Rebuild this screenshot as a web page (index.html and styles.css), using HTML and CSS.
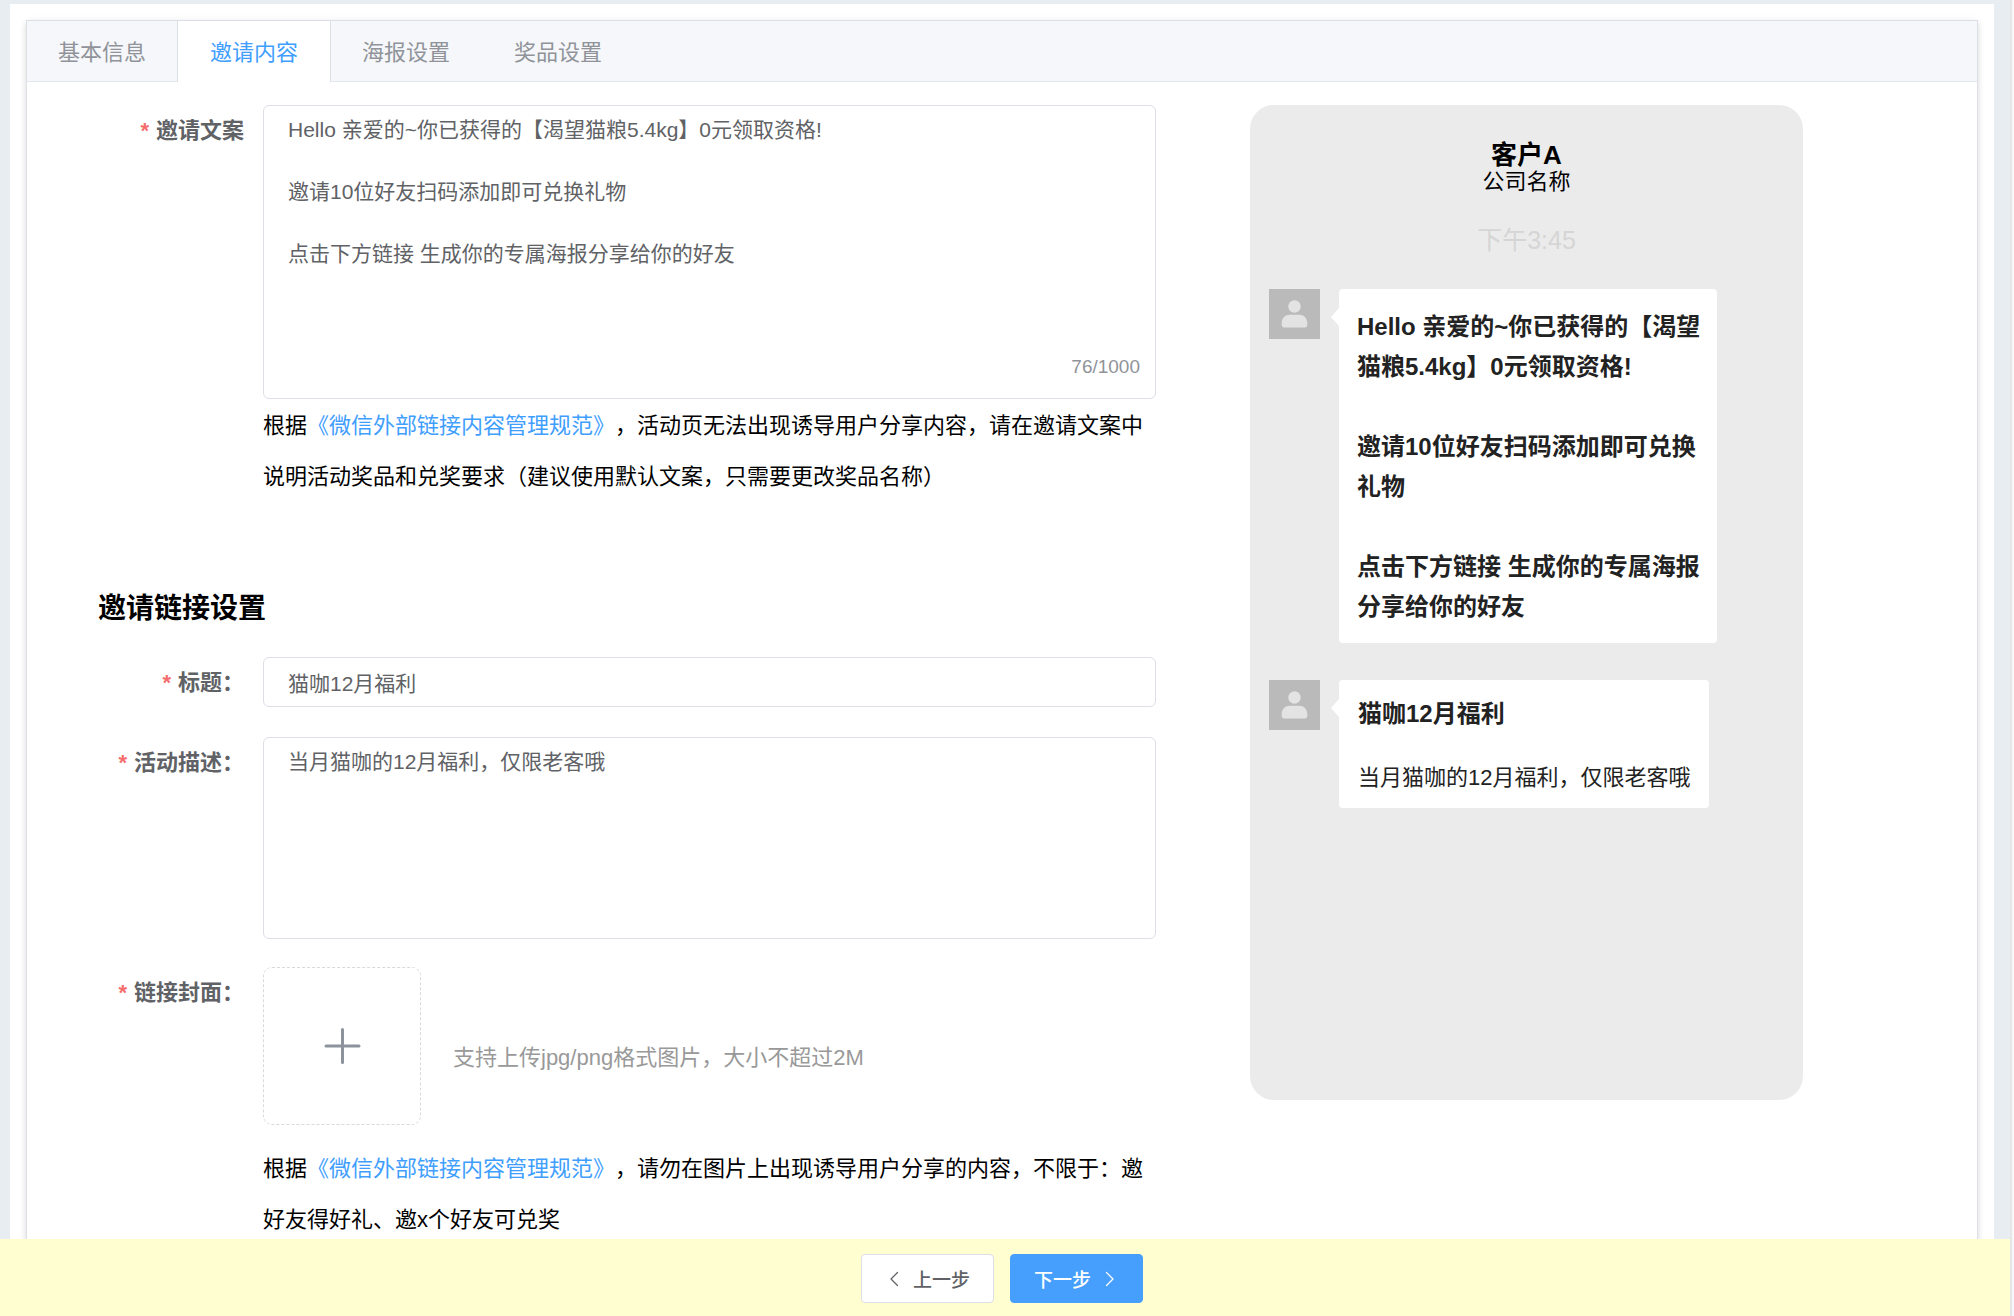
FILE: index.html
```html
<!DOCTYPE html>
<html lang="zh-CN">
<head>
<meta charset="utf-8">
<meta name="viewport" content="width=device-width, initial-scale=1">
<title>邀请内容</title>
<link rel="stylesheet" href="styles.css">
</head>
<body>
<div class="app">
  <main class="page">
    <div class="sheet">
      <section class="card">
        <nav class="tabs" role="tablist">
          <button class="tab" type="button" role="tab">基本信息</button>
          <button class="tab tab-active" type="button" role="tab" aria-selected="true">邀请内容</button>
          <button class="tab" type="button" role="tab">海报设置</button>
          <button class="tab" type="button" role="tab">奖品设置</button>
        </nav>
        <div class="content">
          <form class="form" id="invite-form">
            <div class="row">
              <label class="label" for="copy">邀请文案</label>
              <div class="field">
                <div class="counted">
                  <textarea class="control copy" id="copy">Hello 亲爱的~你已获得的【渴望猫粮5.4kg】0元领取资格!

邀请10位好友扫码添加即可兑换礼物

点击下方链接 生成你的专属海报分享给你的好友</textarea>
                  <span class="count">76/1000</span>
                </div>
                <p class="help">根据<a href="#rules">《微信外部链接内容管理规范》</a>，活动页无法出现诱导用户分享内容，请在邀请文案中说明活动奖品和兑奖要求（建议使用默认文案，只需要更改奖品名称）</p>
              </div>
            </div>
            <h2 class="section-title">邀请链接设置</h2>
            <div class="row">
              <label class="label" for="title">标题：</label>
              <div class="field"><input class="control" id="title" type="text" value="猫咖12月福利"></div>
            </div>
            <div class="row">
              <label class="label" for="desc">活动描述：</label>
              <div class="field"><textarea class="control desc" id="desc">当月猫咖的12月福利，仅限老客哦</textarea></div>
            </div>
            <div class="row">
              <label class="label" for="cover">链接封面：</label>
              <div class="field">
                <div class="upload-line">
                  <button class="upload" id="cover" type="button" aria-label="上传图片">
                    <svg width="38" height="38" viewBox="0 0 38 38" fill="none" stroke="#8c939d" stroke-width="3" stroke-linecap="round"><path d="M19.500 2.500v33M3 19h33"/></svg>
                  </button>
                  <span class="hint">支持上传jpg/png格式图片，大小不超过2M</span>
                </div>
                <p class="help help-cover">根据<a href="#rules">《微信外部链接内容管理规范》</a>，请勿在图片上出现诱导用户分享的内容，不限于：邀好友得好礼、邀x个好友可兑奖</p>
              </div>
            </div>
          </form>
          <aside class="phone">
            <header class="phone-head">
              <strong class="phone-name">客户A</strong>
              <span class="phone-company">公司名称</span>
              <time class="phone-time">下午3:45</time>
            </header>
            <div class="message">
              <svg class="avatar" viewBox="0 0 51 50"><path fill="#bababa" d="M0 0h51v50H0z"/><g fill="#e3e3e3"><circle cx="25.500" cy="17.500" r="6.200"/><path d="M12.700 36v-2c0-5 3.500-8.300 8.300-8.300h9c4.800 0 8.300 3.300 8.300 8.300v2c0 1.500-1 2.400-2.400 2.400H15.100c-1.400 0-2.400-.9-2.400-2.400z"/></g></svg>
              <div class="bubble bubble-copy">Hello 亲爱的~你已获得的【渴望猫粮5.4kg】0元领取资格!

邀请10位好友扫码添加即可兑换礼物

点击下方链接 生成你的专属海报分享给你的好友</div>
            </div>
            <div class="message">
              <svg class="avatar" viewBox="0 0 51 50"><path fill="#bababa" d="M0 0h51v50H0z"/><g fill="#e3e3e3"><circle cx="25.500" cy="17.500" r="6.200"/><path d="M12.700 36v-2c0-5 3.500-8.300 8.300-8.300h9c4.800 0 8.300 3.300 8.300 8.300v2c0 1.500-1 2.400-2.400 2.400H15.100c-1.400 0-2.400-.9-2.400-2.400z"/></g></svg>
              <div class="bubble bubble-link">
                <strong>猫咖12月福利</strong>
                <span>当月猫咖的12月福利，仅限老客哦</span>
              </div>
            </div>
          </aside>
        </div>
      </section>
    </div>
  </main>
  <footer class="footer">
    <button class="btn" type="button"><svg width="18" height="18" viewBox="0 0 18 18" fill="none" stroke="currentColor" stroke-width="1.300" stroke-linecap="round" stroke-linejoin="round"><path d="M12.500 2.500L6 9l6.500 6.500"/></svg>上一步</button>
    <button class="btn btn-primary" type="button">下一步<svg width="18" height="18" viewBox="0 0 18 18" fill="none" stroke="currentColor" stroke-width="1.300" stroke-linecap="round" stroke-linejoin="round"><path d="M5.500 2.500L12 9l-6.500 6.500"/></svg></button>
  </footer>
</div>
</body>
</html>
```
FILE: styles.css
```css
* {
  box-sizing: border-box;
}

body {
  margin: 0;
  background: #f8f8f8;
  color: #000;
  font-family: "Liberation Sans", "Noto Sans CJK SC", sans-serif;
  font-size: 22px;
  text-spacing-trim: space-all;
}

button,
input,
textarea {
  font: inherit;
}

a {
  color: #409eff;
  text-decoration: none;
}

.app {
  display: flex;
  flex-direction: column;
  height: 100vh;
  margin-right: 2px;
  border-right: 2px solid #e6e6e8;
}

.page {
  flex: 1;
  min-height: 0;
  padding: 4px 16px 0 10px;
  overflow-y: auto;
  scrollbar-width: none;
  background: #e8edf2;
}

.sheet {
  padding: 16px;
  background: #fff;
}

.card {
  border: 1px solid #dcdfe6;
  background: #fff;
  box-shadow: 0 3px 6px rgba(0, 0, 0, 0.12), 0 0 9px rgba(0, 0, 0, 0.04);
}

/* Tabs */
.tabs {
  display: flex;
  height: 61px;
  border-bottom: 1px solid #e4e7ed;
  background: #f5f7fa;
}

.tab {
  height: 61px;
  padding: 2px 31px 0;
  border: 1px solid transparent;
  border-width: 0 1px;
  background: none;
  color: #909399;
  line-height: 59px;
}

.tab:first-child {
  margin-left: -1px;
}

.tab-active {
  margin: 0 -1px;
  padding: 2px 32px 0;
  border-color: #dcdfe6;
  background: #fff;
  color: #409eff;
}

.content {
  display: flex;
  align-items: flex-start;
  gap: 94px;
  padding: 23px 174px 40px 71px;
}

/* Form */
.form {
  flex: 1;
  min-width: 0;
}

.row {
  display: flex;
  margin-bottom: 28px;
}

.label {
  flex: none;
  width: 165px;
  padding-right: 19px;
  color: #606266;
  font-weight: bold;
  line-height: 52px;
  text-align: right;
}

.label::before {
  content: "*";
  margin-right: 7px;
  color: #f56c6c;
}

.field {
  flex: 1;
  min-width: 0;
}

.control {
  display: block;
  width: 100%;
  height: 50px;
  padding: 8px 24px;
  border: 1px solid #dcdfe6;
  border-radius: 6px;
  outline: none;
  resize: none;
  background: #fff;
  color: #606266;
  font-size: 21px;
  line-height: 31px;
}

.copy {
  height: 294px;
}

.desc {
  height: 202px;
}

.counted {
  position: relative;
}

.count {
  position: absolute;
  right: 16px;
  bottom: 20px;
  color: #909399;
  font-size: 19px;
  line-height: 24px;
}

.help {
  margin: 0;
  padding-top: 1px;
  line-height: 51px;
}

.help-cover {
  margin-top: 17px;
}

.section-title {
  margin: 87px 0 28px;
  font-size: 28px;
  line-height: 40px;
}

.upload-line {
  display: flex;
  align-items: center;
  gap: 32px;
}

.upload {
  display: flex;
  align-items: center;
  justify-content: center;
  width: 158px;
  height: 158px;
  border: 1px dashed #d9d9d9;
  border-radius: 9px;
  background: #fff;
}

.hint {
  padding-top: 18px;
  color: #999;
}

/* Chat preview */
.phone {
  flex: none;
  width: 553px;
  min-height: 995px;
  padding: 36px 19px;
  border-radius: 24px;
  background: #ebebeb;
}

.phone-head {
  display: flex;
  flex-direction: column;
  align-items: center;
  margin-bottom: 31px;
}

.phone-name {
  font-size: 26px;
  line-height: 28px;
}

.phone-company {
  line-height: 26px;
}

.phone-time {
  margin-top: 27px;
  color: #d5d5d5;
  font-size: 25px;
  line-height: 36px;
}

.message {
  display: flex;
  align-items: flex-start;
  gap: 19px;
  margin-bottom: 37px;
}

.avatar {
  flex: none;
  width: 51px;
  height: 50px;
}

.bubble {
  position: relative;
  max-width: 378px;
  border-radius: 4px;
  background: #fff;
  color: #222;
  line-height: 40px;
}

.bubble::before {
  content: "";
  position: absolute;
  top: 19px;
  left: -8px;
  border: 9px solid transparent;
  border-right: 8px solid #fff;
  border-left: 0;
}

.bubble-copy {
  padding: 18px 16px 16px 18px;
  font-size: 24px;
  font-weight: bold;
  white-space: pre-line;
}

.bubble-link {
  display: flex;
  flex-direction: column;
  gap: 24px;
  padding: 14px 19px 10px;
}

.bubble-link strong {
  font-size: 24px;
}

/* Step footer */
.footer {
  display: flex;
  flex: none;
  justify-content: center;
  gap: 16px;
  padding: 15px 6px 13px 0;
  background: #fffed0;
}

.btn {
  display: flex;
  align-items: center;
  justify-content: center;
  gap: 10px;
  height: 49px;
  padding: 0 23px;
  border: 1px solid #dcdfe6;
  border-radius: 4px;
  background: #fff;
  color: #606266;
  font-size: 19px;
  font-weight: 500;
}

.btn-primary {
  border-color: #469ffc;
  background: #469ffc;
  color: #fff;
}
```
